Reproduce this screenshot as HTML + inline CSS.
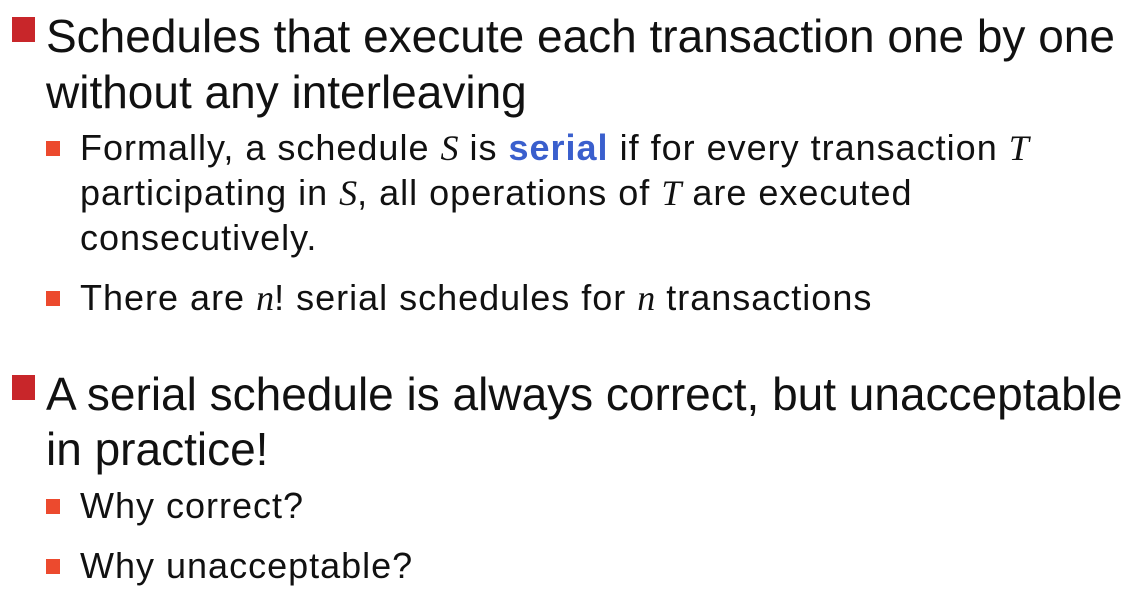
<!DOCTYPE html>
<html><head><style>
body{margin:0;width:1140px;height:594px;background:#fff;position:relative;overflow:hidden;font-family:"Liberation Sans",Arial,sans-serif;color:#111}
.l{position:absolute;white-space:nowrap;line-height:1}
.m{font-size:46px;left:46px}
.s{font-size:36px;left:80px;letter-spacing:1px}
.bb{position:absolute;width:23px;height:25px;background:#c8262a}
.sb{position:absolute;width:14px;height:15px;background:#ec4a2e}
i{font-family:"Liberation Serif",serif;letter-spacing:0}
b{color:#3a5fcd}
</style></head><body>
<div class="bb" style="left:12px;top:17px"></div>
<div class="l m" style="top:13px">Schedules that execute each transaction one by one</div>
<div class="l m" style="top:69px">without any interleaving</div>
<div class="sb" style="left:46px;top:141px"></div>
<div class="l s" style="top:130px">Formally, a schedule <i>S</i> is <b>serial</b> if for every transaction <i>T</i></div>
<div class="l s" style="top:175px">participating in <i>S</i>, all operations of <i>T</i> are executed</div>
<div class="l s" style="top:220px">consecutively.</div>
<div class="sb" style="left:46px;top:291px"></div>
<div class="l s" style="top:280px">There are <i>n</i>! serial schedules for <i>n</i> transactions</div>
<div class="bb" style="left:12px;top:375px"></div>
<div class="l m" style="top:371px">A serial schedule is always correct, but unacceptable</div>
<div class="l m" style="top:426px">in practice!</div>
<div class="sb" style="left:46px;top:499px"></div>
<div class="l s" style="top:488px">Why correct?</div>
<div class="sb" style="left:46px;top:559px"></div>
<div class="l s" style="top:548px">Why unacceptable?</div>
</body></html>
